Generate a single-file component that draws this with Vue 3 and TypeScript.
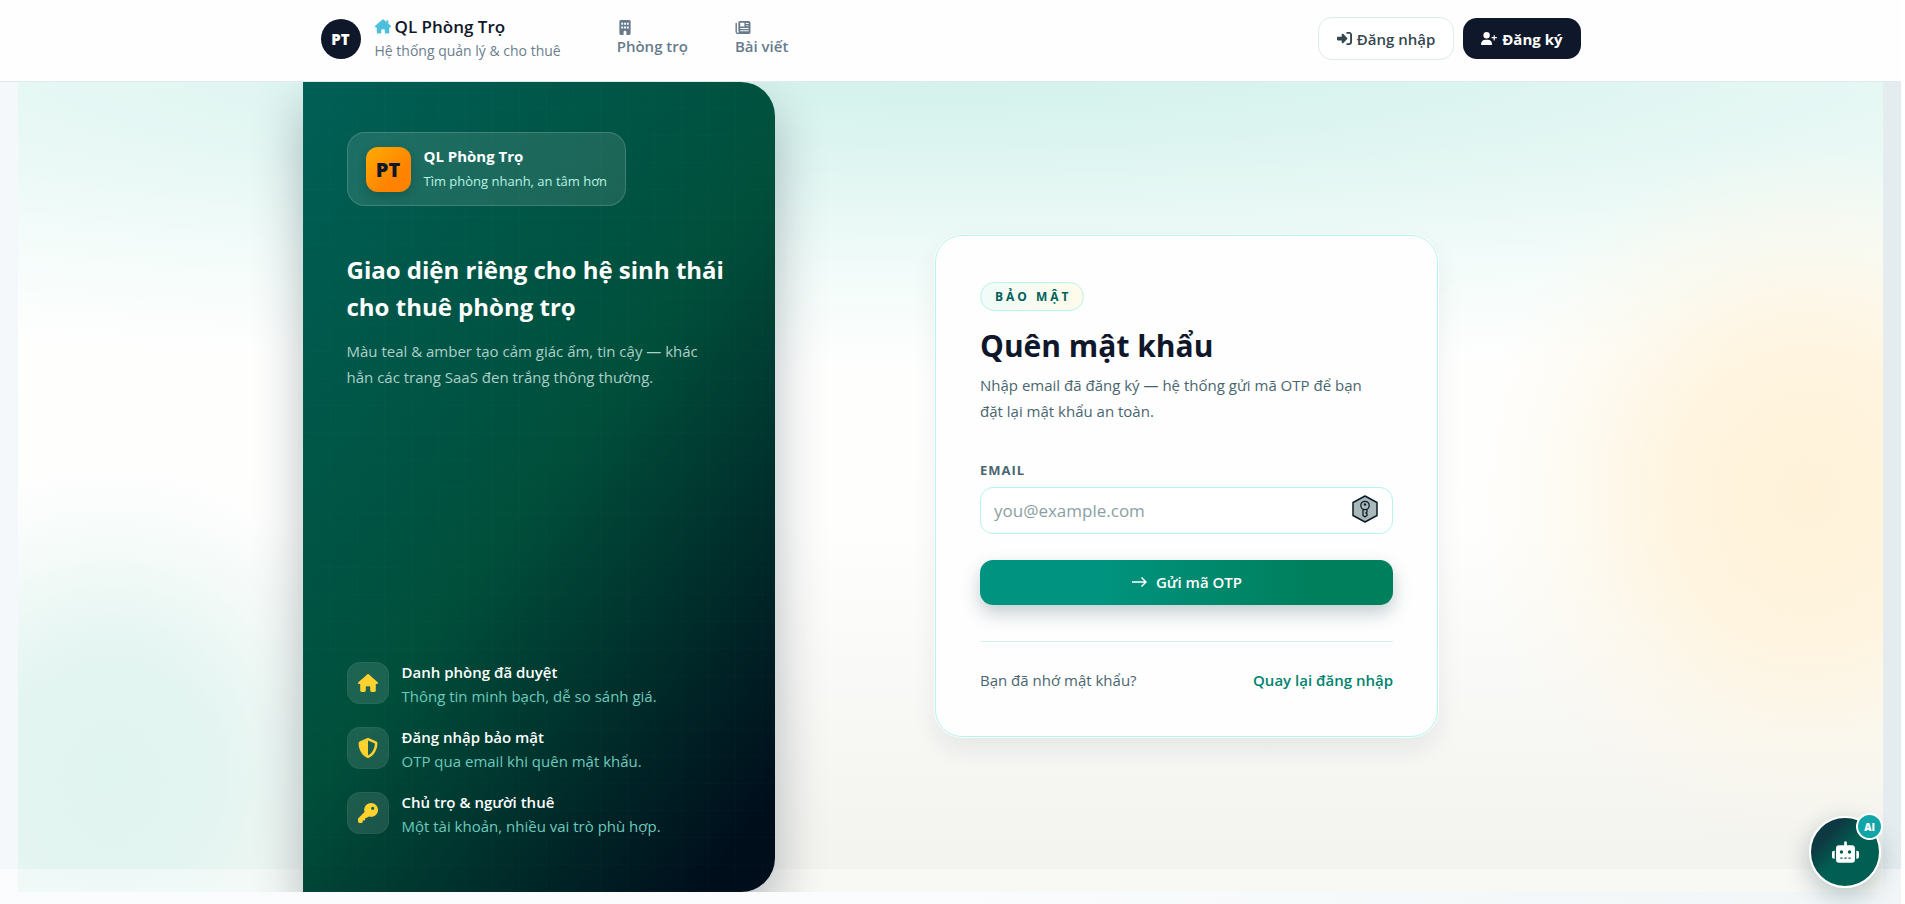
<script setup lang="ts">
import { ref } from 'vue'

interface Feature {
  icon: 'house' | 'shield' | 'key'
  title: string
  text: string
}

const email = ref('')

const features: Feature[] = [
  { icon: 'house', title: 'Danh phòng đã duyệt', text: 'Thông tin minh bạch, dễ so sánh giá.' },
  { icon: 'shield', title: 'Đăng nhập bảo mật', text: 'OTP qua email khi quên mật khẩu.' },
  { icon: 'key', title: 'Chủ trọ & người thuê', text: 'Một tài khoản, nhiều vai trò phù hợp.' },
]

const housePath =
  'M575.8 255.5c0 18-15 32.1-32 32.1l-32 0 .7 160.2c0 2.7-.2 5.4-.5 8.1l0 16.2c0 22.1-17.9 40-40 40l-16 0-40 0-24 0c-22.1 0-40-17.9-40-40l0-24 0-64c0-17.7-14.3-32-32-32l-64 0c-17.7 0-32 14.3-32 32l0 64 0 24c0 22.1-17.9 40-40 40l-24 0-40 0-16 0c-22.1 0-40-17.9-40-40l0-112 0-72.5-32 0c-18 0-32-14-32-32.1c0-9 3-17 10-24L266.4 8c7-7 15-8 22-8s15 2 21 7L564.8 231.5c8 7 12 15 11 24z'
const shieldPath =
  'M256 0c4.6 0 9.2 1 13.4 2.9L457.7 82.8c22 9.3 38.4 31 38.3 57.2c-.5 99.2-41.3 280.7-213.6 363.2c-16.7 8-36.1 8-52.8 0C57.3 420.7 16.5 239.2 16 140c-.1-26.2 16.3-47.9 38.3-57.2L242.7 2.9C246.8 1 251.4 0 256 0zm0 66.8l0 378.1C394 378 431.1 230.1 432 141.4L256 66.8z'
const keyPath =
  'M336 352c97 0 176-79 176-176S433 0 336 0S160 79 160 176c0 19 3 37 8 54L14 384c-9 9-14 20-14 33l0 47c0 26 22 48 48 48l32 0c26 0 40-16 40-40l0-24 24 0c26 0 40-16 40-40l0-24 24 0c13 0 21-3 29-11l45-29c17 5 35 8 54 8zM376 96a40 40 0 1 1 0 80 40 40 0 1 1 0-80z'
</script>

<template>
  <div class="page">
    <header class="header">
      <div class="container header-inner">
        <a class="brand" href="#">
          <span class="brand-mark">PT</span>
          <span class="brand-copy">
            <span class="brand-name">
              <svg class="brand-icon" viewBox="0 0 576 512" aria-hidden="true">
                <path d="M416 32h64v130l-64-56z" />
                <path :d="housePath" />
              </svg>
              QL Phòng Trọ
            </span>
            <span class="brand-tag">Hệ thống quản lý &amp; cho thuê</span>
          </span>
        </a>
        <nav class="nav">
          <a class="nav-link" href="#">
            <svg viewBox="0 0 448 512" aria-hidden="true">
              <path fill-rule="evenodd" d="M80 0H368a48 48 0 0 1 48 48V464a48 48 0 0 1-48 48H272V416a48 48 0 0 0-96 0V512H80a48 48 0 0 1-48-48V48A48 48 0 0 1 80 0ZM96 96v64h64V96ZM192 96v64h64V96ZM288 96v64h64V96ZM96 224v64h64V224ZM192 224v64h64V224ZM288 224v64h64V224Z" />
            </svg>
            Phòng trọ
          </a>
          <a class="nav-link" href="#">
            <svg viewBox="0 0 512 512" aria-hidden="true">
              <path fill-rule="evenodd" d="M160 32H448a64 64 0 0 1 64 64V416a64 64 0 0 1-64 64H80a80 80 0 0 1-80-80V120a24 24 0 0 1 48 0V400a32 32 0 0 0 64 0a48 48 0 0 0 2-12L96 380V96a64 64 0 0 1 64-64ZM160 96V224H304V96ZM352 104v32h96v-32ZM352 184v32h96v-32ZM160 272v32H448v-32ZM160 352v32H448v-32Z" />
            </svg>
            Bài viết
          </a>
        </nav>
        <div class="actions">
          <a class="btn btn-light" href="#">
            <svg viewBox="0 0 512 512" aria-hidden="true">
              <path d="M217.9 105.9L340.7 228.7c7.2 7.2 11.3 17.1 11.3 27.3s-4.1 20.1-11.3 27.3L217.9 406.1c-6.4 6.4-15 9.9-24 9.9c-18.7 0-33.9-15.2-33.9-33.9l0-62.1L32 320c-17.7 0-32-14.3-32-32l0-64c0-17.7 14.3-32 32-32l128 0 0-62.1c0-18.7 15.2-33.9 33.9-33.9c9 0 17.6 3.6 24 9.9zM352 416l64 0c17.7 0 32-14.3 32-32l0-256c0-17.7-14.3-32-32-32l-64 0c-17.7 0-32-14.3-32-32s14.3-32 32-32l64 0c53 0 96 43 96 96l0 256c0 53-43 96-96 96l-64 0c-17.7 0-32-14.3-32-32s14.3-32 32-32z" />
            </svg>
            Đăng nhập
          </a>
          <a class="btn btn-dark" href="#">
            <svg class="wide" viewBox="0 0 640 512" aria-hidden="true">
              <path d="M96 128a128 128 0 1 1 256 0A128 128 0 1 1 96 128zM0 482.3C0 383.8 79.8 304 178.3 304l91.4 0C368.2 304 448 383.8 448 482.3c0 16.4-13.3 29.7-29.7 29.7L29.7 512C13.3 512 0 498.7 0 482.3zM504 312l0-64-64 0c-13.3 0-24-10.7-24-24s10.7-24 24-24l64 0 0-64c0-13.3 10.7-24 24-24s24 10.7 24 24l0 64 64 0c13.3 0 24 10.7 24 24s-10.7 24-24 24l-64 0 0 64c0 13.3-10.7 24-24 24s-24-10.7-24-24z" />
            </svg>
            Đăng ký
          </a>
        </div>
      </div>
    </header>

    <main class="main">
      <div class="container layout">
        <section class="panel">
          <div>
            <div class="panel-brand">
              <span class="panel-mark">PT</span>
              <div>
                <strong class="panel-name">QL Phòng Trọ</strong>
                <span class="panel-tag">Tìm phòng nhanh, an tâm hơn</span>
              </div>
            </div>
            <h2 class="panel-title">Giao diện riêng cho hệ sinh thái<br />cho thuê phòng trọ</h2>
            <p class="panel-text">
              Màu teal &amp; amber tạo cảm giác ấm, tin cậy — khác<br />hẳn các trang SaaS đen trắng thông thường.
            </p>
          </div>
          <ul class="features">
            <li v-for="item in features" :key="item.title" class="feature">
              <span class="feature-icon">
                <svg v-if="item.icon === 'house'" viewBox="0 0 576 512" aria-hidden="true"><path :d="housePath" /></svg>
                <svg v-else-if="item.icon === 'shield'" viewBox="0 0 512 512" aria-hidden="true"><path fill-rule="evenodd" :d="shieldPath" /></svg>
                <svg v-else viewBox="0 0 512 512" aria-hidden="true"><path fill-rule="evenodd" :d="keyPath" /></svg>
              </span>
              <div>
                <strong class="feature-title">{{ item.title }}</strong>
                <span class="feature-text">{{ item.text }}</span>
              </div>
            </li>
          </ul>
        </section>

        <section class="content">
          <form class="card" @submit.prevent>
            <span class="chip">BẢO MẬT</span>
            <h1 class="card-title">Quên mật khẩu</h1>
            <p class="card-text">Nhập email đã đăng ký — hệ thống gửi mã OTP để bạn<br />đặt lại mật khẩu an toàn.</p>
            <label class="label" for="email">EMAIL</label>
            <div class="field">
              <input id="email" v-model="email" type="email" placeholder="you@example.com" />
              <svg class="field-icon" viewBox="0 0 26 28" aria-hidden="true">
                <path d="M13 1L25 7.5V20.5L13 27L1 20.5V7.5Z" fill="#a9b8b8" stroke="#0c1b2a" stroke-width="1.5" stroke-linejoin="round" />
                <circle cx="13" cy="10.5" r="4.2" fill="none" stroke="#0c1b2a" stroke-width="1.3" />
                <circle cx="13" cy="9.5" r="1.2" fill="#0c1b2a" />
                <path d="M11 14.5V20.5L13 22L15 20.5V19L14 18L15 17V14.5" fill="none" stroke="#0c1b2a" stroke-width="1.3" />
              </svg>
            </div>
            <button class="submit" type="submit">
              <svg viewBox="0 0 16 12" aria-hidden="true"><path d="M1 6H15M10.5 1.5L15 6L10.5 10.5" /></svg>
              Gửi mã OTP
            </button>
            <div class="card-foot">
              <span>Bạn đã nhớ mật khẩu?</span>
              <a href="#">Quay lại đăng nhập</a>
            </div>
          </form>
        </section>
      </div>
    </main>

    <button class="chat" type="button" aria-label="AI">
      <svg viewBox="0 0 640 512" aria-hidden="true">
        <path fill-rule="evenodd" d="M320 0a32 32 0 0 1 32 32V96H472a72 72 0 0 1 72 72V440a72 72 0 0 1-72 72H168a72 72 0 0 1-72-72V168a72 72 0 0 1 72-72H288V32A32 32 0 0 1 320 0ZM208 384a16 16 0 0 0 0 32h32a16 16 0 0 0 0-32ZM304 384a16 16 0 0 0 0 32h32a16 16 0 0 0 0-32ZM400 384a16 16 0 0 0 0 32h32a16 16 0 0 0 0-32ZM264 256a40 40 0 1 0-80 0a40 40 0 1 0 80 0ZM456 256a40 40 0 1 0-80 0a40 40 0 1 0 80 0ZM48 224H64V416H48a48 48 0 0 1-48-48V272a48 48 0 0 1 48-48ZM592 224a48 48 0 0 1 48 48v96a48 48 0 0 1-48 48H576V224Z" />
      </svg>
      <span class="chat-badge">AI</span>
    </button>
  </div>
</template>

<style>
body {
  margin: 0;
  background: #ffffff;
}
</style>

<style scoped>
* {
  box-sizing: border-box;
}

.page {
  display: flex;
  flex-direction: column;
  min-height: 100vh;
  margin-right: 4px;
  padding-bottom: 12px;
  background:
    linear-gradient(rgba(255, 255, 255, 0.5), rgba(255, 255, 255, 0.5)) bottom / 100% 35px no-repeat,
    linear-gradient(90deg, #f4f8fb 50%, #e4ecef 100%);
  font-family: "Open Sans", "Noto Sans", sans-serif;
  font-size: 15px;
  color: #0f172a;
}

a {
  color: inherit;
  text-decoration: none;
}

svg {
  display: block;
  flex: none;
  fill: currentColor;
}

.container {
  width: 100%;
  max-width: 1296px;
  margin: 0 auto;
}

.header {
  position: relative;
  z-index: 2;
  background: #fefefe;
  border-bottom: 1px solid #e2e9ec;
}

.header-inner {
  display: flex;
  align-items: center;
  height: 81px;
  padding: 0 18px 4px;
}

.brand {
  display: flex;
  align-items: center;
  gap: 14px;
}

.brand-mark {
  display: grid;
  place-items: center;
  width: 40px;
  height: 40px;
  border-radius: 50%;
  background: #0f172a;
  color: #ffffff;
  font-size: 15px;
  font-weight: 800;
}

.brand-copy {
  display: flex;
  flex-direction: column;
}

.brand-name {
  display: flex;
  align-items: center;
  gap: 4px;
  font-size: 17px;
  font-weight: 600;
  line-height: 24px;
}

.brand-icon {
  width: 16px;
  height: 15px;
  color: #4bbfdc;
}

.brand-tag {
  font-size: 14px;
  line-height: 24px;
  color: #6b7f8c;
}

.nav {
  display: flex;
  gap: 47px;
  margin-left: 56px;
}

.nav-link {
  color: #677b8c;
  font-size: 15px;
  font-weight: 600;
  line-height: 22px;
}

.nav-link svg {
  width: 16px;
  height: 15px;
}

.actions {
  display: flex;
  align-items: center;
  gap: 9px;
  margin-left: auto;
}

.btn {
  display: flex;
  align-items: center;
  justify-content: center;
  gap: 5px;
  height: 41px;
  padding: 0 18px;
  border-radius: 14px;
  font-size: 15px;
  font-weight: 600;
}

.btn svg {
  width: 15px;
  height: 15px;
}

.btn svg.wide {
  width: 16px;
  height: 13px;
}

.btn-light {
  height: 43px;
  background: #ffffff;
  border: 1px solid #e0eaec;
  color: #33474f;
}

.btn-dark {
  background: #0f172a;
  color: #ffffff;
  font-weight: 700;
}

.main {
  display: flex;
  flex: 1;
  margin: 0 18px;
  overflow: hidden;
  background:
    linear-gradient(rgba(255, 255, 255, 0.4), rgba(255, 255, 255, 0.4)) bottom / 100% 23px no-repeat,
    radial-gradient(ellipse 18% 44% at 96% 51%, #fff2d9 0%, rgba(255, 243, 220, 0.9) 40%, rgba(253, 247, 230, 0.5) 70%, rgba(255, 251, 238, 0) 100%),
    radial-gradient(ellipse 15% 38% at 5% 85%, #e0f4f0 0%, rgba(226, 245, 241, 0.9) 40%, rgba(234, 248, 245, 0.5) 70%, rgba(244, 252, 250, 0) 100%),
    radial-gradient(ellipse 115% 38% at 50% -2%, #d2f1eb 0%, rgba(216, 243, 238, 0.9) 25%, rgba(236, 250, 247, 0.6) 70%, rgba(250, 255, 254, 0) 100%),
    linear-gradient(180deg, #ffffff 0%, #fefefd 55%, #f3f3ef 95%);
}

.layout {
  display: grid;
  grid-template-columns: minmax(0, 59fr) minmax(0, 103fr);
}

.panel {
  display: flex;
  flex-direction: column;
  justify-content: space-between;
  padding: 50px 44px 52px;
  border-radius: 0 34px 34px 0;
  background:
    repeating-linear-gradient(0deg, rgba(255, 255, 255, 0.01) 0 1px, transparent 1px 27px),
    repeating-linear-gradient(90deg, rgba(255, 255, 255, 0.01) 0 1px, transparent 1px 27px),
    linear-gradient(127deg, #005f56 0%, #004f3b 50%, #000d1b 94%);
  box-shadow: 0 24px 50px rgba(15, 35, 50, 0.3);
  color: #ffffff;
}

.panel-brand {
  display: inline-flex;
  align-items: center;
  gap: 13px;
  height: 74px;
  padding: 0 18px;
  border: 1px solid rgba(255, 255, 255, 0.16);
  border-radius: 18px;
  background: rgba(255, 255, 255, 0.11);
}

.panel-mark {
  display: grid;
  place-items: center;
  width: 45px;
  height: 45px;
  border-radius: 12px;
  background: linear-gradient(135deg, #ffab00, #ff8200 70%);
  box-shadow: 0 4px 10px rgba(0, 40, 30, 0.25);
  color: #0f172a;
  font-size: 20px;
  font-weight: 800;
}

.panel-name {
  display: block;
  font-size: 15px;
  font-weight: 700;
  line-height: 24px;
}

.panel-tag {
  display: block;
  font-size: 13px;
  line-height: 26px;
  color: #b9f3e4;
}

.panel-title {
  margin: 45px 0 0;
  font-size: 24px;
  font-weight: 700;
  line-height: 37px;
}

.panel-text {
  margin: 13px 0 0;
  font-size: 15px;
  line-height: 26px;
  color: #accfc9;
}

.features {
  display: grid;
  gap: 17px;
  margin: 0;
  padding: 0;
  list-style: none;
}

.feature {
  display: flex;
  gap: 13px;
  height: 48px;
}

.feature-icon {
  display: grid;
  place-items: center;
  width: 42px;
  height: 42px;
  border: 1px solid rgba(255, 255, 255, 0.05);
  border-radius: 13px;
  background: rgba(255, 255, 255, 0.11);
  color: #ffd230;
}

.feature-icon svg {
  width: 20px;
  height: 20px;
}

.feature-title,
.feature-text {
  display: block;
  font-size: 15px;
}

.feature-title {
  font-weight: 600;
  line-height: 21px;
}

.feature-text {
  line-height: 26px;
  color: #6dc9bd;
}

.content {
  display: grid;
  place-items: center;
  padding-bottom: 3px;
}

.card {
  width: 503px;
  padding: 46px 44px 43px;
  border: 1px solid #b5f5ea;
  border-radius: 27px;
  background: #fefefe;
  box-shadow: 0 0 0 1px rgba(255, 255, 255, 0.8), 0 12px 24px rgba(30, 60, 70, 0.08);
}

.chip {
  display: inline-block;
  padding: 0 11px 0 14px;
  border: 1px solid #b5f5ea;
  border-radius: 15px;
  background: linear-gradient(90deg, #f0fbf9, #fffbeb);
  color: #005f5a;
  font-size: 12px;
  font-weight: 700;
  line-height: 27px;
  letter-spacing: 3px;
}

.card-title {
  margin: 13px 0 0;
  font-size: 30px;
  font-weight: 700;
  line-height: 44px;
}

.card-text {
  margin: 4px 0 0;
  font-size: 15px;
  line-height: 26px;
  color: #49666f;
}

.label {
  display: block;
  margin-top: 36px;
  font-size: 13px;
  font-weight: 700;
  line-height: 20px;
  letter-spacing: 1px;
  color: #49666f;
}

.field {
  position: relative;
  margin-top: 7px;
}

.field input {
  display: block;
  width: 100%;
  height: 47px;
  padding: 0 52px 0 13px;
  border: 1px solid #b5f5ea;
  border-radius: 13px;
  background: #ffffff;
  color: #0f172a;
  font: inherit;
  font-size: 17px;
}

.field input::placeholder {
  color: #8a9fa3;
  opacity: 1;
}

.field-icon {
  position: absolute;
  top: 8px;
  right: 15px;
  width: 26px;
  height: 28px;
}

.submit {
  display: flex;
  align-items: center;
  justify-content: center;
  gap: 9px;
  width: 100%;
  height: 45px;
  margin-top: 26px;
  border: 0;
  border-radius: 13px;
  background: linear-gradient(90deg, #009480 28%, #007f5c 80%);
  box-shadow: 0 8px 18px rgba(15, 60, 70, 0.25);
  color: #ffffff;
  font: inherit;
  font-weight: 600;
}

.submit svg {
  width: 16px;
  height: 12px;
  fill: none;
  stroke: currentColor;
  stroke-width: 1.5;
}

.card-foot {
  display: flex;
  justify-content: space-between;
  margin-top: 36px;
  padding-top: 25px;
  border-top: 1px solid #cdf3ec;
  color: #49666f;
  font-size: 15px;
  line-height: 26px;
}

.card-foot a {
  color: #00836f;
  font-weight: 600;
}

.chat {
  position: fixed;
  right: 24px;
  bottom: 16px;
  z-index: 3;
  display: grid;
  place-items: center;
  width: 72px;
  height: 72px;
  padding: 0;
  border: 2px solid #ffffff;
  border-radius: 50%;
  background: linear-gradient(135deg, #0d3a42 25%, #005f52 50%);
  box-shadow: 0 8px 24px rgba(15, 60, 70, 0.28);
  color: #ffffff;
  font: inherit;
}

.chat > svg {
  width: 27px;
  height: 22px;
}

.chat-badge {
  position: absolute;
  top: -5px;
  right: -4px;
  display: grid;
  place-items: center;
  width: 27px;
  height: 27px;
  border: 2px solid #ffffff;
  border-radius: 50%;
  background: #12a5a8;
  font-size: 10px;
  font-weight: 800;
}
</style>
